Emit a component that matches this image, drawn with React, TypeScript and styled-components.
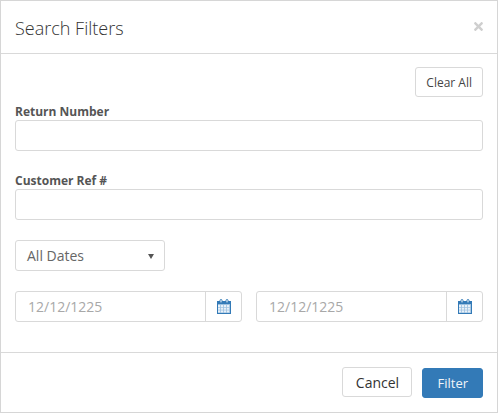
import React from "react";
import styled, { createGlobalStyle } from "styled-components";
import { FaTimes } from "react-icons/fa";

const Global = createGlobalStyle`
  html, body { margin: 0; padding: 0; background: #fff; }
  body { font-family: "Open Sans", "Liberation Sans", sans-serif; }
  * { box-sizing: border-box; }
`;

const Modal = styled.div`
  width: 498px;
  height: 413px;
  border: 1px solid #d6d6d6;
  background: #fff;
  display: flex;
  flex-direction: column;
  color: #333;
`;

const Header = styled.div`
  height: 53px;
  flex: none;
  border-bottom: 1px solid #d9d9d9;
  padding: 0 14px;
  display: flex;
  align-items: center;
  justify-content: space-between;
`;

const Title = styled.h4`
  margin: 2px 0 0;
  font-size: 18px;
  font-weight: 300;
  line-height: 26px;
  color: #333;
`;

const Close = styled.span`
  display: flex;
  color: #cfcfcf;
  font-size: 13px;
  margin: 0 -2px 1px 0;
`;

const Body = styled.div`
  flex: 1;
  padding: 13px 14px 0;
  display: flex;
  flex-direction: column;
`;

const ClearRow = styled.div`
  display: flex;
  justify-content: flex-end;
  margin-bottom: 7px;
`;

const Button = styled.button`
  font-family: inherit;
  font-size: 12px;
  height: 30px;
  padding: 0 10px;
  border-radius: 3px;
  border: 1px solid #d9d9d9;
  background: #fff;
  color: #444;
`;

const Field = styled.div<{ $gap: number }>`
  margin-bottom: ${(p) => p.$gap}px;
  display: flex;
  flex-direction: column;
`;

const Label = styled.label`
  font-size: 12px;
  font-weight: 700;
  line-height: 16px;
  color: #555;
`;

const Input = styled.div`
  height: 31px;
  border: 1px solid #d9d9d9;
  border-radius: 3px;
  background: #fff;
`;

const Select = styled.div`
  width: 150px;
  height: 31px;
  border: 1px solid #d9d9d9;
  border-radius: 3px;
  padding: 0 10px 0 11px;
  display: flex;
  align-items: center;
  justify-content: space-between;
  font-size: 14px;
  color: #666;
`;

const Caret = styled.span`
  width: 0;
  height: 0;
  margin-top: 1px;
  border-left: 3px solid transparent;
  border-right: 3px solid transparent;
  border-top: 5px solid #555;
`;

const DateRow = styled.div`
  display: flex;
  gap: 14px;
  margin-top: 20px;
`;

const DateGroup = styled.div`
  flex: 1;
  height: 31px;
  border: 1px solid #d9d9d9;
  border-radius: 3px;
  display: flex;
`;

const DateText = styled.div`
  flex: 1;
  padding-left: 12px;
  font-size: 14px;
  line-height: 29px;
  color: #a8a8a8;
`;

const Addon = styled.div`
  width: 36px;
  border-left: 1px solid #d9d9d9;
  display: flex;
  align-items: center;
  justify-content: center;
`;

const Footer = styled.div`
  height: 60px;
  flex: none;
  border-top: 1px solid #d9d9d9;
  padding: 14px 14px 0;
  display: flex;
  justify-content: flex-end;
  gap: 10px;
`;

const CancelButton = styled(Button)`
  font-size: 14px;
  width: 70px;
  padding: 0;
  color: #333;
`;

const FilterButton = styled(Button)`
  font-size: 13px;
  padding: 0 14px;
  height: 30px;
  margin-top: 1px;
  background: #337ab7;
  border-color: #337ab7;
  color: #f0f4f8;
`;

const CalendarIcon = () => (
  <svg width="14" height="15" viewBox="0 0 14 15">
    <rect x="0.5" y="3" width="13" height="11.5" fill="#9dc1e0" stroke="#337ab7" />
    <rect x="0" y="2" width="14" height="3" fill="#337ab7" />
    <rect x="3" y="0.5" width="2" height="3.5" rx="1" fill="#fff" stroke="#337ab7" />
    <rect x="9" y="0.5" width="2" height="3.5" rx="1" fill="#fff" stroke="#337ab7" />
    <g fill="#e9f1f8">
      {[1, 4, 7, 10].map((x) =>
        [6, 8.7, 11.4].map((y) => <rect key={`${x}-${y}`} x={x} y={y} width="2.2" height="2" />)
      )}
    </g>
  </svg>
);

const DateInput = () => (
  <DateGroup>
    <DateText>12/12/1225</DateText>
    <Addon>
      <CalendarIcon />
    </Addon>
  </DateGroup>
);

export default function App() {
  return (
    <>
      <Global />
      <Modal>
        <Header>
          <Title>Search Filters</Title>
          <Close>
            <FaTimes />
          </Close>
        </Header>
        <Body>
          <ClearRow>
            <Button>Clear All</Button>
          </ClearRow>
          <Field $gap={22}>
            <Label>Return Number</Label>
            <Input />
          </Field>
          <Field $gap={20}>
            <Label>Customer Ref #</Label>
            <Input />
          </Field>
          <Select>
            All Dates
            <Caret />
          </Select>
          <DateRow>
            <DateInput />
            <DateInput />
          </DateRow>
        </Body>
        <Footer>
          <CancelButton>Cancel</CancelButton>
          <FilterButton>Filter</FilterButton>
        </Footer>
      </Modal>
    </>
  );
}
